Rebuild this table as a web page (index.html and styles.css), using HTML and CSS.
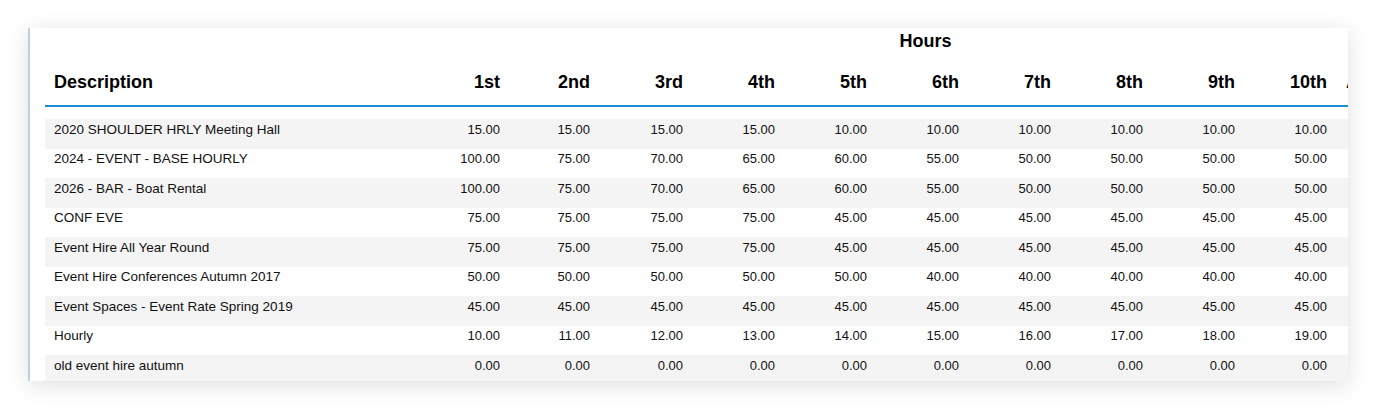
FILE: index.html
```html
<!DOCTYPE html>
<html lang="en">
<head>
<meta charset="utf-8">
<title>Hourly Rates</title>
<link rel="stylesheet" href="styles.css">
</head>
<body>
<div class="card">
  <div class="table">
    <div class="row group-row">
      <div class="cell"></div>
      <div class="cell group">Hours</div>
    </div>
    <div class="row head-row">
      <div class="cell desc">Description</div>
      <div class="cell num">1st</div>
      <div class="cell num">2nd</div>
      <div class="cell num">3rd</div>
      <div class="cell num">4th</div>
      <div class="cell num">5th</div>
      <div class="cell num">6th</div>
      <div class="cell num">7th</div>
      <div class="cell num">8th</div>
      <div class="cell num">9th</div>
      <div class="cell num">10th</div>
      <div class="cell extra">Additional</div>
    </div>
    <div class="body">
      <div class="row data alt"><div class="cell desc">2020 SHOULDER HRLY Meeting Hall</div><div class="cell num">15.00</div><div class="cell num">15.00</div><div class="cell num">15.00</div><div class="cell num">15.00</div><div class="cell num">10.00</div><div class="cell num">10.00</div><div class="cell num">10.00</div><div class="cell num">10.00</div><div class="cell num">10.00</div><div class="cell num">10.00</div><div class="cell"></div></div>
      <div class="row data"><div class="cell desc">2024 - EVENT - BASE HOURLY</div><div class="cell num">100.00</div><div class="cell num">75.00</div><div class="cell num">70.00</div><div class="cell num">65.00</div><div class="cell num">60.00</div><div class="cell num">55.00</div><div class="cell num">50.00</div><div class="cell num">50.00</div><div class="cell num">50.00</div><div class="cell num">50.00</div><div class="cell"></div></div>
      <div class="row data alt"><div class="cell desc">2026 - BAR - Boat Rental</div><div class="cell num">100.00</div><div class="cell num">75.00</div><div class="cell num">70.00</div><div class="cell num">65.00</div><div class="cell num">60.00</div><div class="cell num">55.00</div><div class="cell num">50.00</div><div class="cell num">50.00</div><div class="cell num">50.00</div><div class="cell num">50.00</div><div class="cell"></div></div>
      <div class="row data"><div class="cell desc">CONF EVE</div><div class="cell num">75.00</div><div class="cell num">75.00</div><div class="cell num">75.00</div><div class="cell num">75.00</div><div class="cell num">45.00</div><div class="cell num">45.00</div><div class="cell num">45.00</div><div class="cell num">45.00</div><div class="cell num">45.00</div><div class="cell num">45.00</div><div class="cell"></div></div>
      <div class="row data alt"><div class="cell desc">Event Hire All Year Round</div><div class="cell num">75.00</div><div class="cell num">75.00</div><div class="cell num">75.00</div><div class="cell num">75.00</div><div class="cell num">45.00</div><div class="cell num">45.00</div><div class="cell num">45.00</div><div class="cell num">45.00</div><div class="cell num">45.00</div><div class="cell num">45.00</div><div class="cell"></div></div>
      <div class="row data"><div class="cell desc">Event Hire Conferences Autumn 2017</div><div class="cell num">50.00</div><div class="cell num">50.00</div><div class="cell num">50.00</div><div class="cell num">50.00</div><div class="cell num">50.00</div><div class="cell num">40.00</div><div class="cell num">40.00</div><div class="cell num">40.00</div><div class="cell num">40.00</div><div class="cell num">40.00</div><div class="cell"></div></div>
      <div class="row data alt"><div class="cell desc">Event Spaces - Event Rate Spring 2019</div><div class="cell num">45.00</div><div class="cell num">45.00</div><div class="cell num">45.00</div><div class="cell num">45.00</div><div class="cell num">45.00</div><div class="cell num">45.00</div><div class="cell num">45.00</div><div class="cell num">45.00</div><div class="cell num">45.00</div><div class="cell num">45.00</div><div class="cell"></div></div>
      <div class="row data"><div class="cell desc">Hourly</div><div class="cell num">10.00</div><div class="cell num">11.00</div><div class="cell num">12.00</div><div class="cell num">13.00</div><div class="cell num">14.00</div><div class="cell num">15.00</div><div class="cell num">16.00</div><div class="cell num">17.00</div><div class="cell num">18.00</div><div class="cell num">19.00</div><div class="cell"></div></div>
      <div class="row data alt"><div class="cell desc">old event hire autumn</div><div class="cell num">0.00</div><div class="cell num">0.00</div><div class="cell num">0.00</div><div class="cell num">0.00</div><div class="cell num">0.00</div><div class="cell num">0.00</div><div class="cell num">0.00</div><div class="cell num">0.00</div><div class="cell num">0.00</div><div class="cell num">0.00</div><div class="cell"></div></div>
    </div>
  </div>
</div>
</body>
</html>
```

FILE: styles.css
```css
* {
  box-sizing: border-box;
}

html, body {
  margin: 0;
  padding: 0;
  background: #ffffff;
}

body {
  font-family: "Liberation Sans", Arial, sans-serif;
  color: #000;
  padding: 28px;
}

.card {
  width: 1320px;
  height: 353px;
  background: #fff;
  border-left: 2px solid #bccfda;
  padding-left: 15px;
  overflow: hidden;
  box-shadow: 0 4px 22px rgba(0, 0, 0, 0.13);
}

.table {
  width: 1396px;
}

.row {
  display: grid;
  grid-template-columns: 365px 90px 90px 93px repeat(7, 92px) 114px;
}

.group-row {
  padding-top: 3px;
}

.group-row .group {
  grid-column: 2 / -1;
  text-align: center;
  font-size: 18px;
  font-weight: bold;
  line-height: 20px;
}

.head-row {
  padding-top: 21px;
  padding-bottom: 13px;
  border-bottom: 2px solid #1b8fd6;
  font-size: 18px;
  font-weight: bold;
  line-height: 20px;
}

.cell.desc {
  padding-left: 9px;
  white-space: nowrap;
}

.row.data .cell.desc {
  font-size: 13.5px;
}

.cell.num {
  text-align: right;
  white-space: nowrap;
}

.cell.extra {
  padding-left: 19px;
  white-space: nowrap;
}

.body {
  margin-top: 12px;
}

.row.data {
  height: 29.5px;
  padding-top: 2.5px;
  font-size: 13px;
  line-height: 15px;
  color: #111;
}

.row.data.alt {
  background: #f4f4f4;
}
```
